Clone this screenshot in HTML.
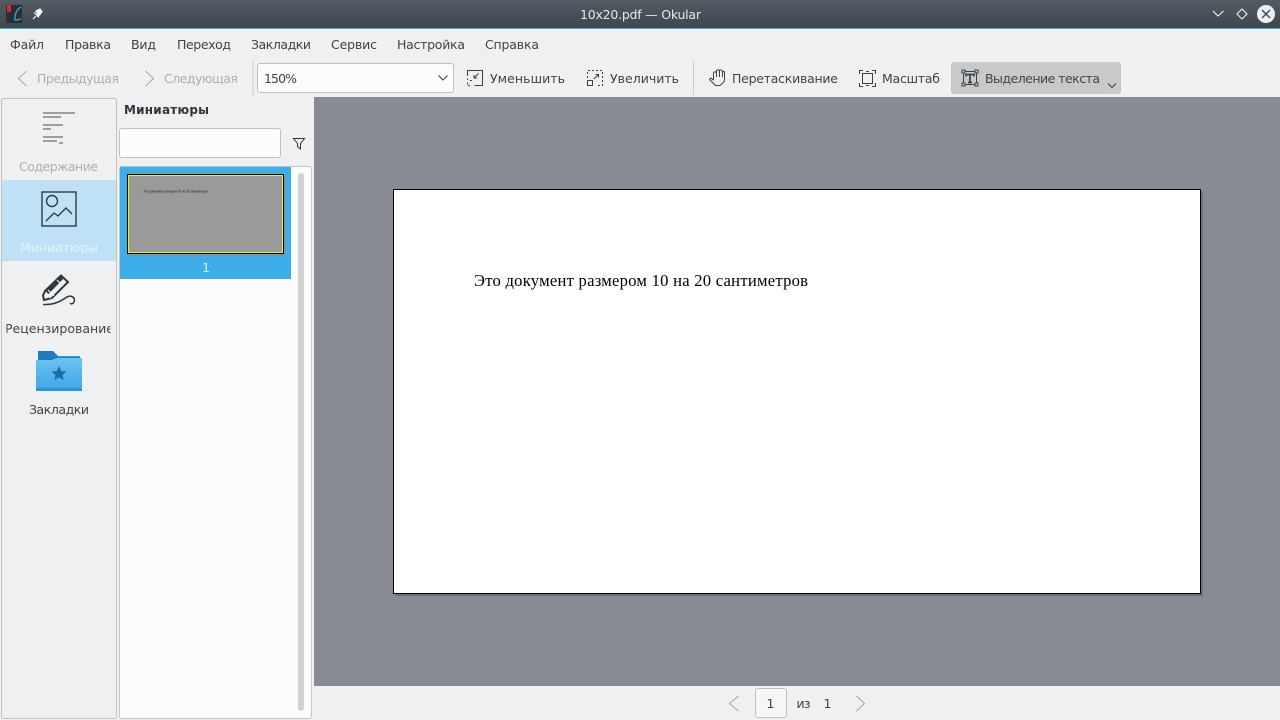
<!DOCTYPE html>
<html lang="ru">
<head>
<meta charset="utf-8">
<title>10x20.pdf — Okular</title>
<style>
html,body{margin:0;padding:0;width:1280px;height:720px;overflow:hidden;background:#eff0f1}
svg{display:block}
text{font-family:"DejaVu Sans","Liberation Sans",sans-serif;font-size:12.5px;fill:#3f4449}
.dis{fill:#adb0b2}
.ic{fill:none;stroke:#3a4045;stroke-width:1}
.icd{fill:none;stroke:#a3a6a9;stroke-width:1}
</style>
</head>
<body>
<svg width="1280" height="720" viewBox="0 0 1280 720" xmlns="http://www.w3.org/2000/svg" shape-rendering="geometricPrecision">
<defs>
<linearGradient id="tb" x1="0" y1="0" x2="0" y2="1"><stop offset="0" stop-color="#525c64"/><stop offset="1" stop-color="#3f464d"/></linearGradient>
<linearGradient id="fd" x1="0" y1="0" x2="0" y2="1"><stop offset="0" stop-color="#6cc1f1"/><stop offset="1" stop-color="#3da6e6"/></linearGradient>
<clipPath id="cl"><rect x="6.500" y="315" width="104" height="25"/></clipPath>
</defs>
<rect width="1280" height="720" fill="#eff0f1"/>

<!-- Title bar -->
<rect width="1280" height="28" fill="url(#tb)"/>
<rect y="28" width="1280" height="1" fill="#3daee9"/>
<rect x="6" y="5" width="16" height="18" fill="#2b2e33"/>
<rect x="7" y="5" width="4" height="7" fill="#d8283a"/>
<path d="M21 7C17 9 14.500 14 15 20C17 20 19.500 20 21 18.500" fill="none" stroke="#2a9fe0" stroke-width="1.500"/>
<path d="M36 16L33 19M34 12.500L39 17.500M36 11L40 9L42 11.500L40 14.500L38.500 16Z" fill="#f5f6f6" stroke="#f5f6f6" stroke-width="1.200"/>
<text x="580" y="19" textLength="121" lengthAdjust="spacing" style="fill:#e6e8e9">10x20.pdf — Okular</text>
<path d="M1213 11L1218 16L1223.500 11" fill="none" stroke="#f2f3f3" stroke-width="1.100"/>
<path d="M1242 9L1247 14L1242 19L1237 14Z" fill="none" stroke="#f2f3f3" stroke-width="1.100"/>
<circle cx="1266" cy="14" r="9" fill="#eff0f1"/>
<path d="M1262 10L1270 18M1270 10L1262 18" stroke="#3a4147" stroke-width="1.300"/>

<!-- Menu bar -->
<text x="10" y="49" textLength="34">Файл</text>
<text x="65" y="49" textLength="46">Правка</text>
<text x="131" y="49" textLength="25">Вид</text>
<text x="177" y="49" textLength="54">Переход</text>
<text x="251" y="49" textLength="60">Закладки</text>
<text x="331" y="49" textLength="46">Сервис</text>
<text x="397" y="49" textLength="68">Настройка</text>
<text x="485" y="49" textLength="54">Справка</text>

<!-- Toolbar -->
<path d="M26.500 71L18.500 78.500L26.500 86" class="icd"/>
<text class="dis" x="37" y="83" textLength="82">Предыдущая</text>
<path d="M145.500 71L153.500 78.500L145.500 86" class="icd"/>
<text class="dis" x="164" y="83" textLength="74">Следующая</text>
<rect x="252.500" y="61" width="1" height="34" fill="#c9cbcc"/>
<rect x="257.500" y="63.500" width="196" height="29" rx="2.500" fill="#fcfcfc" stroke="#bfc1c3"/>
<text x="264" y="83" textLength="33">150%</text>
<path d="M438.500 75.500L443 80L447.500 75.500" class="ic"/>

<!-- Уменьшить -->
<path d="M467.500 76V70.500H482.500V85.500H474.500" class="ic"/>
<path d="M467.500 78.500V80M467.500 82.500V85.500H471.500M470 80.500H472.500" class="ic" stroke-dasharray="2 1.500"/>
<path d="M478.500 73.500L474 78M474 75V78H477" class="ic"/>
<text x="490" y="83" textLength="75">Уменьшить</text>

<!-- Увеличить -->
<path d="M587.500 78V70.500H602.500V85.500H596" class="ic" stroke-dasharray="2 2"/>
<rect x="587.500" y="80.500" width="5" height="5" class="ic"/>
<path d="M594 79L598.500 74.500M595.500 74.500H598.500V77.500" class="ic"/>
<text x="610" y="83" textLength="69">Увеличить</text>
<rect x="693" y="61" width="1" height="34" fill="#c9cbcc"/>

<!-- Перетаскивание -->
<path d="M720 85.500H715.500L709.500 79.500L711 78L713.500 80V73C713.500 71.500 716.500 71.500 716.500 73V71C716.500 69.500 719.500 69.500 719.500 71C719.500 69.500 722.500 69.500 722.500 71.500C722.500 71 724.500 71 724.500 72.500V80C724.500 82 722 84 720 85.500Z" class="ic" stroke-linejoin="round"/>
<path d="M716.500 73V77M719.500 71V77M722.500 71.500V77" class="ic"/>
<text x="732" y="83" textLength="106">Перетаскивание</text>

<!-- Масштаб -->
<rect x="862.500" y="73.500" width="10" height="10" class="ic"/>
<path d="M859.500 74V70.500H863M872 70.500H875.500V74M875.500 83V86.500H872M863 86.500H859.500V83" class="ic"/>
<path d="M866 71.500H869M866 85.500H869" class="ic"/>
<text x="882" y="83" textLength="58">Масштаб</text>

<!-- Выделение текста -->
<rect x="951" y="62" width="170" height="32" rx="2.500" fill="#c8c9cb"/>
<rect x="963.500" y="71.500" width="13" height="13" class="ic"/>
<rect x="962" y="70" width="3" height="3" fill="#c8c9cb" stroke="#3a4045"/>
<rect x="975" y="70" width="3" height="3" fill="#c8c9cb" stroke="#3a4045"/>
<rect x="962" y="83" width="3" height="3" fill="#c8c9cb" stroke="#3a4045"/>
<rect x="975" y="83" width="3" height="3" fill="#c8c9cb" stroke="#3a4045"/>
<path d="M966 76.500V74.500H974V76.500M970 74.500V82.500M968 82.500H972" fill="none" stroke="#3a4045" stroke-width="1.700"/>
<text x="985" y="83" textLength="115">Выделение текста</text>
<path d="M1108 83.500L1112 87.500L1116 83.500" class="ic"/>

<!-- Sidebar -->
<rect x="1.500" y="98.500" width="115" height="620" rx="2" fill="#eff0f1" stroke="#c0c2c4"/>
<g fill="#9c9ea1">
<rect x="43" y="112" width="32" height="2"/>
<rect x="43" y="116" width="18" height="2"/>
<rect x="43" y="124" width="20" height="2"/>
<rect x="43" y="128" width="8" height="2"/>
<rect x="43" y="136" width="20" height="2"/>
<rect x="43" y="140" width="14" height="2"/>
<rect x="59" y="142" width="4" height="2"/>
</g>
<text class="dis" x="19" y="171" textLength="79">Содержание</text>

<rect x="2" y="180" width="114" height="81" fill="#c0e0f5"/>
<rect x="42" y="192" width="34" height="34" fill="none" stroke="#2f3a42" stroke-width="1.400"/>
<circle cx="52" cy="201" r="5.500" fill="none" stroke="#2f3a42" stroke-width="1.400"/>
<path d="M46 221L54 213L58 216L66 208L72 214" fill="none" stroke="#2f3a42" stroke-width="1.400"/>
<text x="20" y="252" textLength="78" style="fill:#e4f1fa">Миниатюры</text>

<path d="M61 275.500L68 282L52 298L44 300L43 295.500L45 291Z" fill="none" stroke="#31373c" stroke-width="2"/>
<path d="M45 291L61 275.500L64 278L48.500 294Z" fill="#31373c"/>
<path d="M48 290L54 296M46 293L51 298M57 280L63 286" stroke="#eff0f1" stroke-width="1.200"/>
<path d="M43 304.500C52 305 60 302 66 297.500C71 294 76 298 74 302C73 304 71 304.500 70 303" fill="none" stroke="#31373c" stroke-width="1.500"/>
<text x="5" y="333" textLength="109" clip-path="url(#cl)">Рецензирование</text>

<path d="M38 351H53L58 356H80V362H38Z" fill="#1c7fbd"/>
<rect x="58" y="356" width="22" height="1" fill="#3c9ad6"/>
<path d="M36 360H52L57 358H82V391H36Z" fill="url(#fd)"/>
<rect x="36" y="388" width="46" height="3" fill="#2f94d2"/>
<path d="M59 366L61.300 371L66.500 371.500L62.500 375L63.700 380L59 377.400L54.300 380L55.500 375L51.500 371.500L56.700 371Z" fill="#1a6ea8"/>
<text x="29" y="414" textLength="60">Закладки</text>

<!-- Thumbnails panel -->
<text x="124" y="114" textLength="85" style="font-weight:bold;font-size:12px;fill:#31363b">Миниатюры</text>
<rect x="119.500" y="128.500" width="161" height="29" rx="2.500" fill="#fcfcfc" stroke="#bfc1c3"/>
<path d="M293.500 138.500H304.500L300.500 143.500V149L297.500 146.500V143.500Z" fill="none" stroke="#31363b" stroke-width="1"/>
<rect x="119.500" y="166.500" width="192" height="552" rx="2" fill="#fcfcfc" stroke="#c3c5c7"/>
<rect x="120" y="167" width="171" height="112" fill="#3daee9"/>
<rect x="129" y="176" width="157" height="80" fill="#8a8a8a" opacity=".6"/>
<rect x="127.500" y="174.500" width="156" height="79" fill="#9a9a9a" stroke="#000"/>
<rect x="128.500" y="175.500" width="154" height="77" fill="none" stroke="#f5ee1f"/>
<text x="143" y="192.500" textLength="65" style="font-family:'Liberation Serif',serif;font-size:3.800px;fill:#2b2b2b">Это документ размером 10 на 20 сантиметров</text>
<text x="202" y="272" textLength="6.500" style="fill:#d5eefb">1</text>
<rect x="298" y="173" width="6" height="538" rx="3" fill="#cfd1d3"/>

<!-- Canvas -->
<rect x="314" y="97" width="966" height="589" fill="#888b93"/>
<rect x="395" y="191" width="808" height="405" fill="#6f7177"/>
<rect x="393.500" y="189.500" width="807" height="404" fill="#fff" stroke="#000"/>
<text x="474" y="286" textLength="334" style="font-family:'Liberation Serif',serif;font-size:16.600px;fill:#000">Это документ размером 10 на 20 сантиметров</text>

<!-- Bottom bar -->
<path d="M738.500 696L729.500 703.500L738.500 711" class="icd"/>
<rect x="755.500" y="688.500" width="31" height="29" rx="2.500" fill="#f6f6f7" stroke="#bfc1c3"/>
<text x="766.500" y="708" textLength="6.500">1</text>
<text x="796.500" y="708" textLength="14">из</text>
<text x="823.500" y="708" textLength="6.500">1</text>
<path d="M856.500 696L864.500 703.500L856.500 711" class="icd"/>
</svg>
</body>
</html>
